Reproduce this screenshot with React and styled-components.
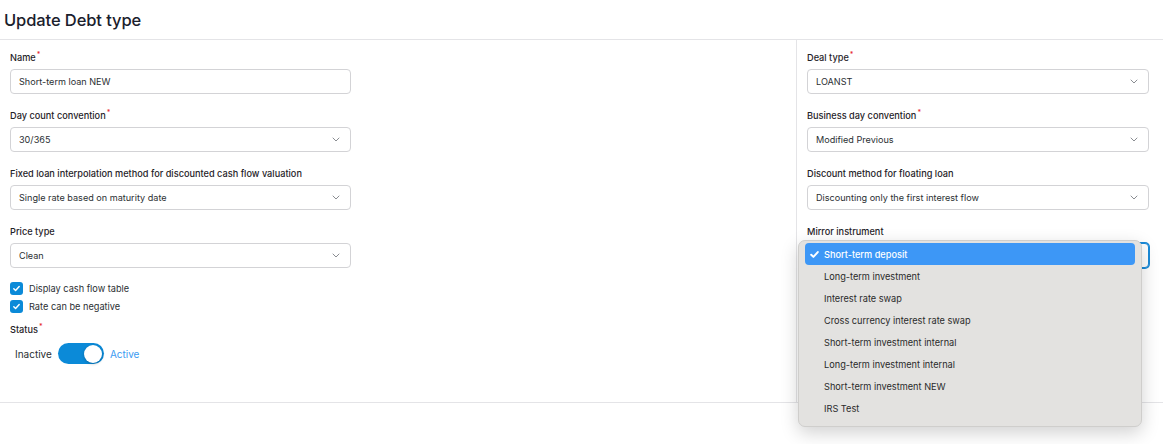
import styled, { createGlobalStyle } from "styled-components";

const Global = createGlobalStyle`
  body {
    margin: 0;
    background: #ffffff;
    font-family: Inter, "Noto Sans", sans-serif;
    color: #1f2328;
  }
`;

const Page = styled.div`
  width: 1163px;
  height: 444px;
  overflow: hidden;
  background: #fff;
`;

const Header = styled.header`
  height: 39px;
  border-bottom: 1px solid #e4e4e7;
  display: flex;
  align-items: center;
  padding-left: 4px;
`;

const Title = styled.h1`
  margin: 0;
  font-size: 16.5px;
  font-weight: 500;
  color: #1a202c;
  letter-spacing: -0.1px;
`;

const Body = styled.div`
  display: grid;
  grid-template-columns: 796px 1fr;
  height: 362px;
  border-bottom: 1px solid #e4e4e7;
`;

const Column = styled.div`
  display: flex;
  flex-direction: column;
  padding: 11px 0 0 10px;
  border-left: ${(p) => (p.$divided ? "1px solid #e4e4e7" : "none")};
`;

const Field = styled.div`
  position: relative;
  display: flex;
  flex-direction: column;
  gap: 5px;
  width: ${(p) => p.$w}px;
  margin-bottom: 15px;
`;

const Label = styled.label`
  font-size: 9.2px;
  font-weight: 500;
  line-height: 13px;
  color: #1f2328;
`;

const Req = styled.sup`
  color: #e5252a;
  font-size: 7px;
  line-height: 0;
  margin-left: 1px;
`;

const Control = styled.div`
  height: 25px;
  box-sizing: border-box;
  border: 1px solid ${(p) => (p.$focus ? "#1a8ad8" : "#d3d3d6")};
  box-shadow: ${(p) => (p.$focus ? "0 0 0 1px #1a8ad8" : "none")};
  border-radius: 4px;
  display: flex;
  align-items: center;
  justify-content: space-between;
  padding: 0 10px 0 8px;
  font-size: 9.1px;
  color: #2b2f33;
  background: #fff;
`;

const Chevron = () => (
  <svg width="8" height="5" viewBox="0 0 8 5" fill="none">
    <path d="M1 1l3 3 3-3" stroke="#8a8d92" strokeWidth="1" strokeLinecap="round" strokeLinejoin="round" />
  </svg>
);

const Select = ({ value, focus }) => (
  <Control $focus={focus}>
    <span>{value}</span>
    <Chevron />
  </Control>
);

const CheckRow = styled.div`
  display: flex;
  align-items: center;
  gap: 6px;
  height: 18px;
  font-size: 9.2px;
  color: #2b2f33;
`;

const Box = styled.span`
  width: 13px;
  height: 13px;
  border-radius: 3px;
  background: #0b8ad8;
  display: inline-flex;
  align-items: center;
  justify-content: center;
`;

const Tick = ({ size = 9, color = "#fff", sw = 1.6 }) => (
  <svg width={size} height={size} viewBox="0 0 10 10" fill="none">
    <path d="M2 5.2l2 2 4-4.4" stroke={color} strokeWidth={sw} strokeLinecap="round" strokeLinejoin="round" />
  </svg>
);

const Checks = styled.div`
  display: flex;
  flex-direction: column;
  margin-top: -4px;
`;

const StatusBlock = styled.div`
  display: flex;
  flex-direction: column;
  margin-top: 8px;
  gap: 7px;
`;

const ToggleRow = styled.div`
  display: flex;
  align-items: center;
  gap: 6px;
  padding-left: 5px;
  font-size: 10px;
`;

const ToggleText = styled.span`
  color: ${(p) => (p.$on ? "#3b9bf2" : "#2b2f33")};
`;

const Track = styled.span`
  width: 46px;
  height: 21px;
  border-radius: 11px;
  background: #0b8ad8;
  display: flex;
  align-items: center;
  justify-content: flex-end;
  padding: 0 2px;
  box-sizing: border-box;
`;

const Knob = styled.span`
  width: 18px;
  height: 18px;
  border-radius: 50%;
  background: #fff;
  box-shadow: 0 1px 3px rgba(0, 0, 0, 0.25);
`;

const Menu = styled.ul`
  position: absolute;
  left: -9px;
  top: 15px;
  width: 344px;
  box-sizing: border-box;
  margin: 0;
  padding: 2px 6px 7px;
  list-style: none;
  background: #e3e2e0;
  border: 1px solid #cfcecc;
  border-radius: 7px;
  box-shadow: 0 6px 18px rgba(0, 0, 0, 0.18);
  z-index: 5;
`;

const Option = styled.li`
  height: 22px;
  display: flex;
  align-items: center;
  padding-left: 4px;
  border-radius: 4px;
  font-size: 9.2px;
  color: ${(p) => (p.$active ? "#fff" : "#2a2a2a")};
  background: ${(p) => (p.$active ? "#3d97f6" : "transparent")};
  font-weight: ${(p) => (p.$active ? 500 : 400)};
`;

const Mark = styled.span`
  width: 15px;
  display: inline-flex;
  align-items: center;
`;

const options = [
  "Short-term deposit",
  "Long-term investment",
  "Interest rate swap",
  "Cross currency interest rate swap",
  "Short-term investment internal",
  "Long-term investment internal",
  "Short-term investment NEW",
  "IRS Test",
];

export default function App() {
  return (
    <Page>
      <Global />
      <Header>
        <Title>Update Debt type</Title>
      </Header>
      <Body>
        <Column>
          <Field $w={341}>
            <Label>Name<Req>*</Req></Label>
            <Control>
              <span>Short-term loan NEW</span>
            </Control>
          </Field>
          <Field $w={341}>
            <Label>Day count convention<Req>*</Req></Label>
            <Select value="30/365" />
          </Field>
          <Field $w={341}>
            <Label>Fixed loan interpolation method for discounted cash flow valuation</Label>
            <Select value="Single rate based on maturity date" />
          </Field>
          <Field $w={341}>
            <Label>Price type</Label>
            <Select value="Clean" />
          </Field>
          <Checks>
            <CheckRow>
              <Box><Tick /></Box>
              Display cash flow table
            </CheckRow>
            <CheckRow>
              <Box><Tick /></Box>
              Rate can be negative
            </CheckRow>
          </Checks>
          <StatusBlock>
            <Label>Status<Req>*</Req></Label>
            <ToggleRow>
              <ToggleText>Inactive</ToggleText>
              <Track><Knob /></Track>
              <ToggleText $on>Active</ToggleText>
            </ToggleRow>
          </StatusBlock>
        </Column>
        <Column $divided>
          <Field $w={342}>
            <Label>Deal type<Req>*</Req></Label>
            <Select value="LOANST" />
          </Field>
          <Field $w={342}>
            <Label>Business day convention<Req>*</Req></Label>
            <Select value="Modified Previous" />
          </Field>
          <Field $w={342}>
            <Label>Discount method for floating loan</Label>
            <Select value="Discounting only the first interest flow" />
          </Field>
          <Field $w={342}>
            <Label>Mirror instrument</Label>
            <Select value="Short-term deposit" focus />
            <Menu>
              {options.map((o, i) => (
                <Option key={o} $active={i === 0}>
                  <Mark>{i === 0 && <Tick size={11} sw={1.8} />}</Mark>
                  {o}
                </Option>
              ))}
            </Menu>
          </Field>
        </Column>
      </Body>
    </Page>
  );
}
